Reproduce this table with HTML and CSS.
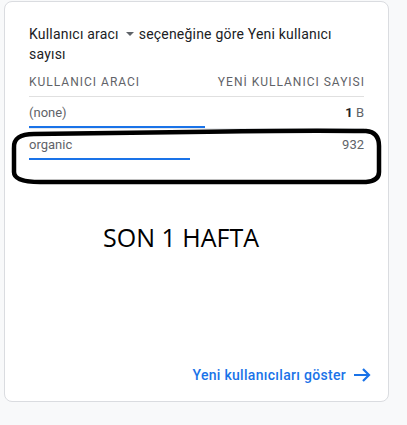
FILE: index.html
```html
<!DOCTYPE html>
<html lang="tr">
<head>
<meta charset="utf-8">
<title>Yeni kullanıcılar</title>
<link rel="stylesheet" href="styles.css">
</head>
<body>
<div class="card">
  <div class="title"><span>Kullanıcı aracı</span><span class="drop"></span><span>seçeneğine göre Yeni kullanıcı</span> <span>sayısı</span></div>
  <div class="thead">
    <span>KULLANICI ARACI</span>
    <span>YENİ KULLANICI SAYISI</span>
  </div>
  <div class="row">
    <div class="cells"><span>(none)</span><span class="val"><b>1</b> B</span></div>
    <div class="bar" style="width:176px"></div>
  </div>
  <div class="row last">
    <div class="cells"><span>organic</span><span class="val">932</span></div>
    <div class="bar" style="width:161px"></div>
  </div>
  <div class="note">SON 1 HAFTA</div>
  <div class="footer">
    <a class="link" href="#">Yeni kullanıcıları göster<svg class="arrow" width="17" height="14" viewBox="0 0 17 14"><path d="M0 7h15M9 1l6 6-6 6" fill="none" stroke="#1a73e8" stroke-width="2.2"/></svg></a>
  </div>
</div>
<svg class="circle" width="407" height="425" viewBox="0 0 407 425"><path d="M14 148 Q13 134 34 134 L190 132 Q300 130 366 131 Q379 132 379 146 L379 172 Q379 181 366 182 L40 182 Q14 182 14 172 Z" fill="none" stroke="#000" stroke-width="4.5"/></svg>
</body>
</html>
```
FILE: styles.css
```css
html, body {
  margin: 0;
  padding: 0;
}
body {
  background: #f8f9fa;
  width: 407px;
  height: 425px;
  position: relative;
  overflow: hidden;
  font-family: Roboto, "Noto Sans", sans-serif;
}
.card {
  box-sizing: border-box;
  margin: 1px 0 0 4px;
  width: 385px;
  height: 401px;
  background: #fff;
  border: 1px solid #dadce0;
  border-radius: 8px;
  padding: 22px 24px 16px 24px;
  display: flex;
  flex-direction: column;
}
.title {
  font-size: 14px;
  line-height: 20px;
  color: #202124;
  letter-spacing: 0.2px;
}
.drop {
  display: inline-block;
  width: 0;
  height: 0;
  margin: 0 5px 0 7px;
  border-left: 4px solid transparent;
  border-right: 4px solid transparent;
  border-top: 4px solid #5f6368;
  vertical-align: 3px;
}
.thead {
  margin-top: 10px;
  display: flex;
  justify-content: space-between;
  font-size: 12px;
  line-height: 16px;
  letter-spacing: 1px;
  color: #5f6368;
  padding-bottom: 6px;
  border-bottom: 1px solid #e0e0e0;
}
.thead span:last-child {
  margin-right: -1px;
}
.row {
  padding-top: 6px;
  border-bottom: 1px solid #e8eaed;
}
.row.last {
  border-bottom: none;
}
.cells {
  display: flex;
  justify-content: space-between;
  font-size: 13px;
  line-height: 20px;
  color: #5f6368;
}
.val b {
  color: #202124;
  font-weight: 700;
}
.bar {
  margin-top: 3px;
  height: 2px;
  background: #1a73e8;
}
.note {
  margin-top: 62px;
  margin-left: 74px;
  font-family: "Open Sans", sans-serif;
  font-size: 25px;
  line-height: 30px;
  color: #000;
}
.footer {
  margin-top: auto;
  display: flex;
  justify-content: flex-end;
  margin-right: -7px;
}
.link {
  display: flex;
  align-items: center;
  color: #1a73e8;
  text-decoration: none;
  font-size: 14px;
  line-height: 20px;
  font-weight: 500;
  letter-spacing: 0.3px;
}
.arrow {
  margin-left: 8px;
}
.circle {
  position: absolute;
  top: 0;
  left: 0;
  pointer-events: none;
}
```
